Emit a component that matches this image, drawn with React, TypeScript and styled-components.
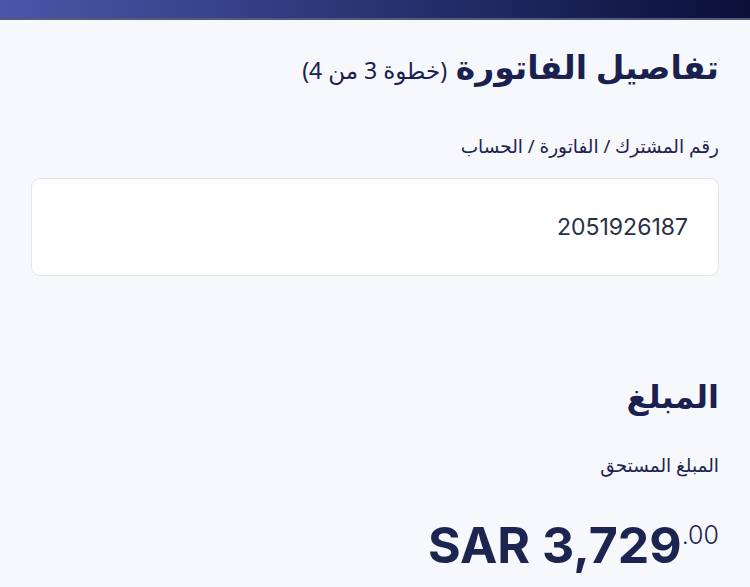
import * as React from 'react';
import styled, { createGlobalStyle } from 'styled-components';

const GlobalStyle = createGlobalStyle`
  html, body {
    margin: 0;
    padding: 0;
    background: #f7f8fc;
  }
  body {
    font-family: "Noto Sans", "DejaVu Sans", sans-serif;
    color: #1d2350;
  }
`;

const TopBar = styled.div`
  height: 18px;
  background: linear-gradient(90deg, #4a57a8 0%, #2c3778 45%, #0a1038 100%);
  border-bottom: 2px solid #545a7e;
`;

const Page = styled.div`
  direction: rtl;
  padding: 23px 31px 0 31px;
`;

const Title = styled.h1`
  margin: 0;
  font-size: 33px;
  font-weight: 700;
  line-height: 48px;
  color: #1a2150;
`;

const Step = styled.span`
  font-size: 23px;
  font-weight: 400;
`;

const Label = styled.div<{ $top: number }>`
  margin-top: ${(p) => p.$top}px;
  font-size: 18.5px;
  line-height: 28px;
  color: #1d2350;
`;

const Field = styled.div`
  margin-top: 18px;
  height: 98px;
  box-sizing: border-box;
  background: #ffffff;
  border: 1px solid #e4e5ea;
  border-radius: 9px;
  display: flex;
  align-items: center;
  padding: 0 30px;
`;

const FieldValue = styled.span`
  font-family: Inter, "Liberation Sans", sans-serif;
  font-size: 23px;
  color: #2a2f45;
  direction: ltr;
`;

const SectionTitle = styled.h2`
  margin: 96px 0 0 0;
  font-size: 32px;
  font-weight: 700;
  line-height: 48px;
  color: #1a2150;
`;

const Amount = styled.div`
  margin-top: 28px;
  direction: ltr;
  text-align: right;
  font-family: Inter, "Liberation Sans", sans-serif;
  font-weight: 700;
  font-size: 50px;
  line-height: 56px;
  color: #1c2450;
`;

const Cents = styled.span`
  font-size: 25px;
  font-weight: 300;
  vertical-align: 19px;
`;

export default function App() {
  return (
    <>
      <GlobalStyle />
      <TopBar />
      <Page>
        <Title>
          تفاصيل الفاتورة <Step>(خطوة 3 من 4)</Step>
        </Title>
        <Label $top={38}>رقم المشترك / الفاتورة / الحساب</Label>
        <Field>
          <FieldValue>2051926187</FieldValue>
        </Field>
        <SectionTitle>المبلغ</SectionTitle>
        <Label $top={31}>المبلغ المستحق</Label>
        <Amount>
          SAR 3,729<Cents>.00</Cents>
        </Amount>
      </Page>
    </>
  );
}
